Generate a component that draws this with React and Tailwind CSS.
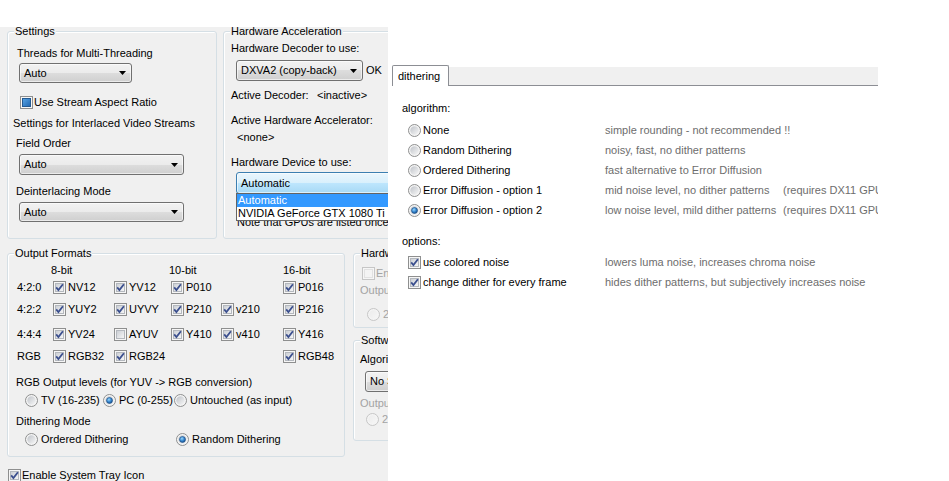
import { useId } from "react"

function useSvgId() {
    return useId().replace(/[^a-zA-Z0-9]/g, "")
}

function Check({ checked = true, disabled = false }) {
    const id = useSvgId()
    return (
        <svg width="13" height="13" viewBox="0 0 13 13" className="shrink-0">
            <defs>
                <linearGradient id={id} x1="0" y1="0" x2="1" y2="1">
                    <stop offset="0" stopColor={disabled ? "#f4f4f4" : "#c9cdd3"} />
                    <stop offset="1" stopColor={disabled ? "#f4f4f4" : "#f8f8f8"} />
                </linearGradient>
            </defs>
            <rect x="0.5" y="0.5" width="12" height="12" fill="#f6f6f6" stroke={disabled ? "#c6c6c6" : "#8e8f8f"} />
            <rect x="2.5" y="2.5" width="8" height="8" fill={`url(#${id})`} stroke={disabled ? "#e2e2e2" : "#b4b8be"} />
            {checked && (
                <path d="M3.2 6.4 L5.4 9 L9.9 3.3" fill="none" stroke="#3b4f8e" strokeWidth="1.8" />
            )}
        </svg>
    )
}

function Mixed() {
    const id = useSvgId()
    return (
        <svg width="13" height="13" viewBox="0 0 13 13" className="shrink-0">
            <defs>
                <linearGradient id={id} x1="0" y1="0" x2="1" y2="1">
                    <stop offset="0" stopColor="#5aa6e6" />
                    <stop offset="1" stopColor="#1f66b0" />
                </linearGradient>
            </defs>
            <rect x="0.5" y="0.5" width="12" height="12" fill="#f6f6f6" stroke="#8e8f8f" />
            <rect x="2.5" y="2.5" width="8" height="8" fill={`url(#${id})`} stroke="#235a92" />
        </svg>
    )
}

function Radio({ on = false, disabled = false }) {
    const id = useSvgId()
    return (
        <svg width="13" height="13" viewBox="0 0 13 13" className="shrink-0">
            <defs>
                <linearGradient id={id + "a"} x1="0" y1="0" x2="1" y2="1">
                    <stop offset="0" stopColor={disabled ? "#ececec" : "#bfc3c9"} />
                    <stop offset="1" stopColor={disabled ? "#f6f6f6" : "#f7f7f7"} />
                </linearGradient>
                <radialGradient id={id + "b"} cx="0.4" cy="0.35" r="0.65">
                    <stop offset="0" stopColor="#9ad8fb" />
                    <stop offset="0.55" stopColor="#3a8ad2" />
                    <stop offset="1" stopColor="#17508f" />
                </radialGradient>
            </defs>
            <circle cx="6.5" cy="6.5" r="6" fill="#f4f4f4" stroke={disabled ? "#c6c6c6" : "#8e8f8f"} />
            <circle cx="6.5" cy="6.5" r="4.2" fill={`url(#${id}a)`} />
            {on && <circle cx="6.5" cy="6.5" r="3" fill={`url(#${id}b)`} stroke="#1d4f86" strokeWidth="0.6" />}
        </svg>
    )
}

function Arrow() {
    return (
        <svg width="7" height="4" viewBox="0 0 7 4" className="shrink-0">
            <path d="M0 0H7L3.5 4Z" fill="#000" />
        </svg>
    )
}

function Combo({ text, className, hot = false }) {
    return (
        <div
            className={
                "flex shrink-0 items-center justify-between rounded-[3px] border pl-[4px] pr-[5px] shadow-[inset_0_0_0_1px_rgba(255,255,255,0.6)] " +
                (hot
                    ? "border-[#3c7fb1] bg-[linear-gradient(#eaf6fd_0%,#d9f0fc_50%,#bee6fd_50%,#a7d9f5_100%)] "
                    : "border-[#707070] bg-[linear-gradient(#f2f2f2_0%,#ebebeb_50%,#dddddd_50%,#cfcfcf_100%)] ") +
                className
            }
        >
            <span>{text}</span>
            <Arrow />
        </div>
    )
}

function Group({ title, className, children }) {
    return (
        <div
            className={
                "relative flex shrink-0 flex-col items-start rounded-[3px] border border-[#d5dfe5] shadow-[inset_1px_1px_0_#fff] " +
                className
            }
        >
            <span className="absolute left-[6px] top-[-7px] bg-[#f0f0f0] px-[1px]">{title}</span>
            {children}
        </div>
    )
}

const colWidths = ["w-[61px]", "w-[57px]", "w-[50px]", "w-[62px]", "w-[60px]"]

function FmtRow({ label, cells, className }) {
    return (
        <div className={"flex h-[13px] items-center " + className}>
            <span className="w-[36px]">{label}</span>
            {cells.map((c, i) => (
                <div key={i} className={colWidths[i] + " flex items-center gap-[2px]"}>
                    {c && (
                        <>
                            <Check checked={c[1]} />
                            <span>{c[0]}</span>
                        </>
                    )}
                </div>
            ))}
        </div>
    )
}

function RadioLabel({ text, on, className = "" }) {
    return (
        <div className={"flex items-center gap-[3px] " + className}>
            <Radio on={on} />
            <span>{text}</span>
        </div>
    )
}

function LavPanel() {
    return (
        <div className="flex w-[388px] shrink-0 flex-col">
            <div className="h-[27px] shrink-0 bg-white" />
            <div className="flex-1 overflow-hidden bg-[#f0f0f0]">
                <div className="flex pt-[4px]">
                    <Group title="Settings" className="ml-[7px] h-[208px] w-[210px]">
                        <span className="ml-[9px] mt-[15px]">Threads for Multi-Threading</span>
                        <Combo text="Auto" className="ml-[11px] mt-[3px] h-[20px] w-[113px]" />
                        <div className="ml-[12px] mt-[13px] flex items-center gap-[1px]">
                            <Mixed />
                            <span>Use Stream Aspect Ratio</span>
                        </div>
                        <span className="ml-[5px] mt-[8px]">Settings for Interlaced Video Streams</span>
                        <span className="ml-[8px] mt-[7px]">Field Order</span>
                        <Combo text="Auto" className="ml-[11px] mt-[4px] h-[21px] w-[165px]" />
                        <span className="ml-[8px] mt-[10px]">Deinterlacing Mode</span>
                        <Combo text="Auto" className="ml-[11px] mt-[4px] h-[20px] w-[165px]" />
                    </Group>

                    <Group title="Hardware Acceleration" className="ml-[6px] h-[208px] w-[220px]">
                        <span className="ml-[7px] mt-[10px]">Hardware Decoder to use:</span>
                        <div className="ml-[12px] mt-[5px] flex items-center gap-[3px]">
                            <Combo text="DXVA2 (copy-back)" className="h-[21px] w-[127px]" />
                            <span>OK</span>
                        </div>
                        <div className="ml-[7px] mt-[8px] flex">
                            <span className="w-[86px]">Active Decoder:</span>
                            <span>&lt;inactive&gt;</span>
                        </div>
                        <span className="ml-[7px] mt-[12px]">Active Hardware Accelerator:</span>
                        <span className="ml-[13px] mt-[4px]">&lt;none&gt;</span>
                        <span className="ml-[7px] mt-[12px]">Hardware Device to use:</span>
                        <div className="relative z-10 ml-[12px] mt-[3px]">
                            <Combo hot text="Automatic" className="h-[22px] w-[200px]" />
                            <div className="absolute left-0 top-[21px] w-[200px] border border-[#646464] bg-white">
                                <div className="h-[13px] bg-[#3399ff] pl-[1px] text-white">Automatic</div>
                                <div className="h-[13px] pl-[1px]">NVIDIA GeForce GTX 1080 Ti</div>
                            </div>
                        </div>
                        <span className="ml-[13px] mt-[22px]">Note that GPUs are listed once for every display.</span>
                    </Group>
                </div>

                <div className="mt-[14px] flex">
                    <Group title="Output Formats" className="ml-[7px] h-[204px] w-[338px]">
                        <div className="flex flex-col items-start pl-[9px]">
                            <div className="mt-[10px] flex">
                                <span className="w-[34px]" />
                                <span className="w-[118px]">8-bit</span>
                                <span className="w-[114px]">10-bit</span>
                                <span>16-bit</span>
                            </div>
                            <FmtRow
                                className="mt-[4px]"
                                label="4:2:0"
                                cells={[["NV12", true], ["YV12", true], ["P010", true], null, ["P016", true]]}
                            />
                            <FmtRow
                                className="mt-[9px]"
                                label="4:2:2"
                                cells={[["YUY2", true], ["UYVY", true], ["P210", true], ["v210", true], ["P216", true]]}
                            />
                            <FmtRow
                                className="mt-[12px]"
                                label="4:4:4"
                                cells={[["YV24", true], ["AYUV", false], ["Y410", true], ["v410", true], ["Y416", true]]}
                            />
                            <FmtRow
                                className="mt-[9px]"
                                label="RGB"
                                cells={[["RGB32", true], ["RGB24", true], null, null, ["RGB48", true]]}
                            />
                            <span className="-ml-[1px] mt-[13px]">RGB Output levels (for YUV -&gt; RGB conversion)</span>
                            <div className="ml-[8px] mt-[5px] flex">
                                <RadioLabel text="TV (16-235)" className="w-[78px]" />
                                <RadioLabel text="PC (0-255)" on className="w-[71px]" />
                                <RadioLabel text="Untouched (as input)" />
                            </div>
                            <span className="-ml-[1px] mt-[8px]">Dithering Mode</span>
                            <div className="ml-[8px] mt-[5px] flex">
                                <RadioLabel text="Ordered Dithering" className="w-[151px]" />
                                <RadioLabel text="Random Dithering" on />
                            </div>
                        </div>
                    </Group>

                    <div className="ml-[8px] flex w-[120px] shrink-0 flex-col">
                        <Group title="Hardware Deinterlacing" className="h-[75px] w-[120px]">
                            <div className="ml-[8px] mt-[13px] flex items-center gap-[1px] text-[#a3a3a3]">
                                <Check checked={false} disabled />
                                <span>Enable Adaptive HW Deinterlacing</span>
                            </div>
                            <span className="ml-[6px] mt-[4px] text-[#a3a3a3]">Output Mode</span>
                            <div className="ml-[13px] mt-[11px] flex items-center gap-[3px] text-[#a3a3a3]">
                                <Radio disabled />
                                <span>25p (50i)</span>
                            </div>
                        </Group>
                        <Group title="Software Deinterlacing" className="mt-[12px] h-[101px] w-[120px]">
                            <span className="ml-[6px] mt-[12px]">Algorithm</span>
                            <Combo text="No Software Deinterlacing" className="ml-[11px] mt-[5px] h-[21px] w-[160px]" />
                            <span className="ml-[6px] mt-[5px] text-[#a3a3a3]">Output Mode</span>
                            <div className="ml-[12px] mt-[3px] flex items-center gap-[3px] text-[#a3a3a3]">
                                <Radio disabled />
                                <span>25p (50i)</span>
                            </div>
                        </Group>
                    </div>
                </div>

                <div className="ml-[8px] mt-[12px] flex items-center gap-[1px]">
                    <Check />
                    <span>Enable System Tray Icon</span>
                </div>
            </div>
        </div>
    )
}

const algorithms = [
    ["None", "simple rounding - not recommended !!", ""],
    ["Random Dithering", "noisy, fast, no dither patterns", ""],
    ["Ordered Dithering", "fast alternative to Error Diffusion", ""],
    ["Error Diffusion - option 1", "mid noise level, no dither patterns", "(requires DX11 GPU)"],
    ["Error Diffusion - option 2", "low noise level, mild dither patterns", "(requires DX11 GPU)"],
]

const options = [
    ["use colored noise", "lowers luma noise, increases chroma noise"],
    ["change dither for every frame", "hides dither patterns, but subjectively increases noise"],
]

function DitherPanel() {
    return (
        <div className="flex-1 bg-white">
            <div className="ml-[4px] flex w-[486px] flex-col overflow-hidden">
                <div className="mt-[65px] flex h-[21px] items-end">
                    <div className="flex h-[21px] w-[57px] shrink-0 items-center rounded-t-[2px] border-x border-t border-[#8c8e94] bg-white pl-[5px]">
                        dithering
                    </div>
                    <div className="h-[19px] flex-1 border-b border-[#8c8e94] bg-[#f0f0f0]" />
                </div>

                <span className="ml-[10px] mt-[16px]">algorithm:</span>
                <div className="mt-[5px] flex flex-col">
                    {algorithms.map(([label, desc, extra], i) => (
                        <div key={label} className="flex h-[20px] items-center">
                            <div className="ml-[16px] flex w-[197px] shrink-0 items-center gap-[2px]">
                                <Radio on={i === 4} />
                                <span>{label}</span>
                            </div>
                            <span className="w-[178px] shrink-0 text-[#6d6d6d]">{desc}</span>
                            <span className="text-[#6d6d6d]">{extra}</span>
                        </div>
                    ))}
                </div>

                <span className="ml-[10px] mt-[15px]">options:</span>
                <div className="mt-[4px] flex flex-col">
                    {options.map(([label, desc]) => (
                        <div key={label} className="flex h-[20px] items-center">
                            <div className="ml-[16px] flex w-[197px] shrink-0 items-center gap-[2px]">
                                <Check />
                                <span>{label}</span>
                            </div>
                            <span className="text-[#6d6d6d]">{desc}</span>
                        </div>
                    ))}
                </div>
            </div>
        </div>
    )
}

export default function App() {
    return (
        <div className="flex h-[481px] w-[949px] overflow-hidden whitespace-nowrap bg-white font-['Liberation_Sans',Arial,sans-serif] text-[11px] leading-[13px] text-black">
            <LavPanel />
            <DitherPanel />
        </div>
    )
}
